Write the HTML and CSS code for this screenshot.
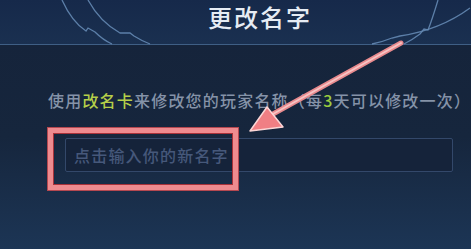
FILE: index.html
```html
<!DOCTYPE html>
<html lang="zh">
<head>
<meta charset="utf-8">
<link rel="stylesheet" href="styles.css">
</head>
<body>
<div class="screen">
  <header class="header">
    <svg class="deco" width="471" height="45" viewBox="0 0 471 45">
      <path d="M62 0 Q72 22 86 31 L88 28 L95 32 Q103 40 112 44" />
      <path d="M88 0 Q100 22 120 33 L130 33 L134 36 Q142 41 150 44" />
      <path d="M438 0 Q432 20 428 30 L424 29 L420 34 Q412 40 404 44" />
      <path d="M470 8 Q440 30 400 36 L392 38 Q382 42 372 44" />
    </svg>
    <h1 class="title">更改名字</h1>
  </header>
  <main class="content">
    <p class="desc">使用<span class="hl">改名卡</span>来修改您的玩家名称（每<span class="num">3</span>天可以修改一次）</p>
    <div class="input">点击输入你的新名字</div>
  </main>
  <div class="mark"></div>
  <svg class="arrow" width="471" height="249" viewBox="0 0 471 249">
    <line x1="401" y1="43" x2="264" y2="119" class="shaft" />
    <line x1="401" y1="43" x2="264" y2="119" class="shaft-in" />
    <polygon points="250,131 267,107 283,127" class="head" />
  </svg>
</div>
</body>
</html>
```

FILE: styles.css
```css
html, body {
  margin: 0;
  padding: 0;
}
body {
  width: 471px;
  height: 249px;
  overflow: hidden;
  font-family: "Noto Sans CJK SC", "Noto Sans", sans-serif;
}
.screen {
  position: relative;
  width: 471px;
  height: 249px;
  background: linear-gradient(180deg, #15233a 0%, #16263d 55%, #1c3555 100%);
}
.header {
  position: relative;
  height: 44px;
  border-bottom: 1px solid #3f5f85;
  background: linear-gradient(180deg, #16294a 0%, #1a3050 100%);
  display: flex;
  justify-content: center;
  align-items: flex-start;
  padding-left: 47px;
}
.deco {
  position: absolute;
  left: 0;
  top: 0;
}
.deco path {
  fill: none;
  stroke: #6488b3;
  stroke-width: 1.3;
  opacity: 0.9;
}
.title {
  position: relative;
  margin: 0 0 0 2px;
  font-size: 24px;
  line-height: 34px;
  font-weight: 500;
  letter-spacing: 2px;
  color: #e6ecf4;
}
.content {
  padding: 0 8px 0 48px;
}
.desc {
  margin: 45px 0 0 0;
  font-size: 16px;
  line-height: 20px;
  letter-spacing: 1.2px;
  font-weight: 500;
  color: #8593a8;
  white-space: nowrap;
}
.hl {
  color: #b5cf49;
}
.num {
  color: #9ccc40;
}
.input {
  margin: 28px 0 0 17px;
  width: 378px;
  height: 32px;
  border: 1px solid #33486a;
  border-radius: 2px;
  background: #15233a;
  padding-left: 8px;
  font-size: 16px;
  line-height: 32px;
  letter-spacing: 1.2px;
  font-weight: 500;
  color: #46587a;
}
.mark {
  position: absolute;
  left: 48px;
  top: 128px;
  width: 180px;
  height: 52px;
  border: 5px solid #ee8b8f;
  box-shadow: inset 0 0 0 1px #a8323a, 0 0 0 1px #b54850;
}
.arrow {
  position: absolute;
  left: 0;
  top: 0;
}
.shaft {
  stroke: #e88a8e;
  stroke-width: 5;
  stroke-linecap: round;
}
.shaft-in {
  stroke: #f6c3c3;
  stroke-width: 2;
  stroke-linecap: round;
}
.head {
  fill: #f07f84;
  stroke: #fbd6d6;
  stroke-width: 1.5;
  stroke-linejoin: round;
}
```
